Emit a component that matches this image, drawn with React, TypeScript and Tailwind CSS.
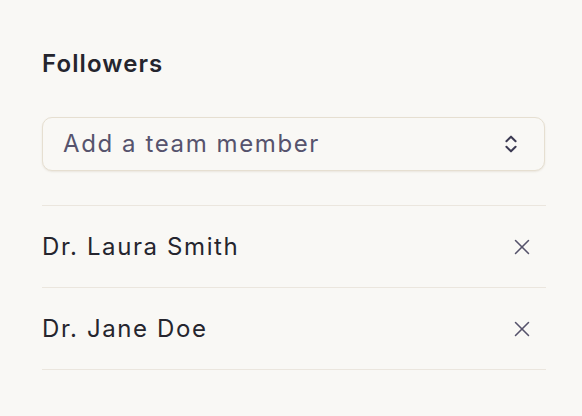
import React from "react";
import { ChevronsUpDown, X } from "lucide-react";

export default function App() {
  const people = ["Dr. Laura Smith", "Dr. Jane Doe"];
  return (
    <div
      className="w-[582px] h-[416px] bg-[#f9f8f5] pt-[48px] pl-[42px]"
      style={{ fontFamily: "Inter, 'Noto Sans', sans-serif" }}
    >
      <div className="w-[504px]">
        <h2 className="text-[24px] leading-[32px] font-semibold text-[#25252e] tracking-[1.1px]">Followers</h2>
        <div className="mt-[37px] h-[54px] rounded-[10px] border-[1.5px] border-[#e6dfd1] bg-[#f9f8f5] shadow-[0_1px_2px_rgba(120,100,60,0.12)] flex items-center justify-between pl-[20px] pr-[22px] w-[503px]">
          <span className="text-[24px] text-[#56536d] tracking-[1.6px]">Add a team member</span>
          <ChevronsUpDown size={22} strokeWidth={2.2} className="text-[#3c3a52]" />
        </div>
        <div className="mt-[34px] border-t-[1.5px] border-[#ebe6de]">
          {people.map((p) => (
            <div
              key={p}
              className="h-[82px] flex items-center justify-between border-b-[1.5px] border-[#ebe6de]"
            >
              <span className="text-[24px] text-[#25252e] tracking-[1.6px]">{p}</span>
              <X size={26} strokeWidth={1.4} className="text-[#55536b] mr-[11px]" />
            </div>
          ))}
        </div>
      </div>
    </div>
  );
}
